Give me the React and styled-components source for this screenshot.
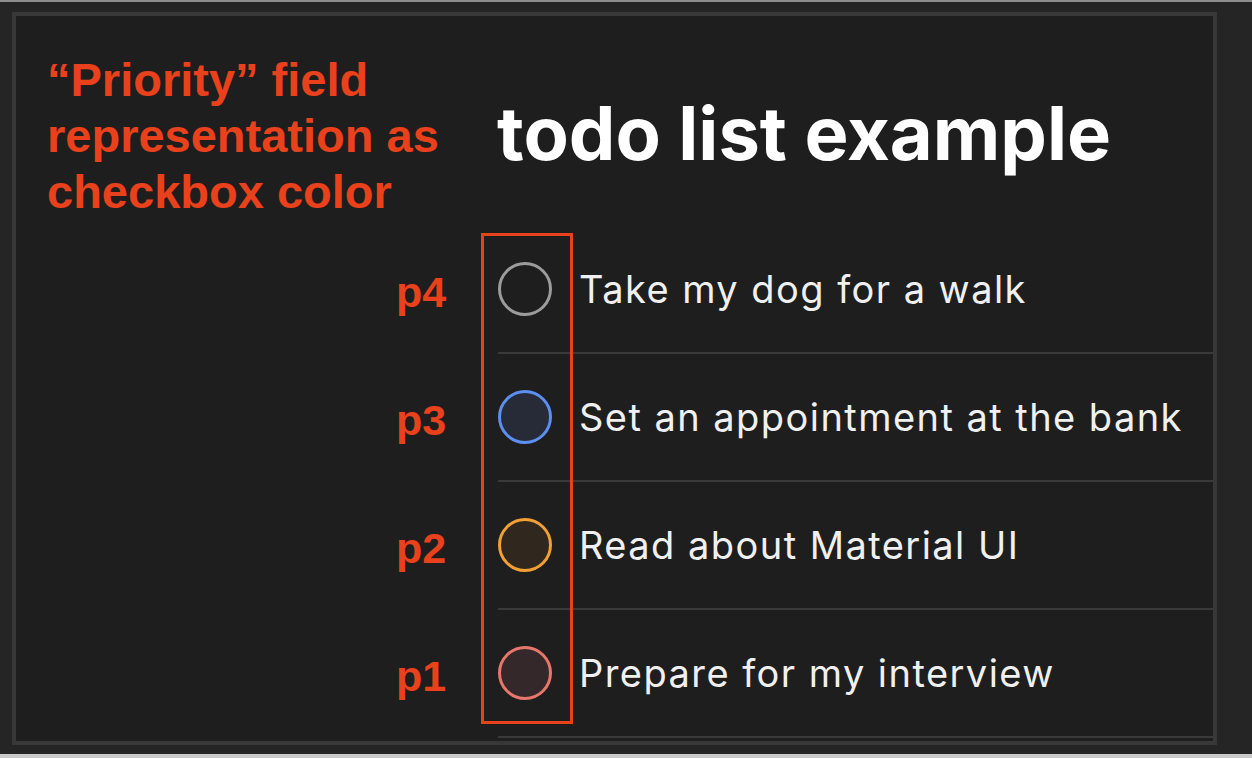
import React from "react";
import styled, { createGlobalStyle } from "styled-components";

const Global = createGlobalStyle`
  html, body { margin: 0; padding: 0; background: #252525; }
  * { box-sizing: border-box; }
`;

const Page = styled.div`
  width: 1252px;
  height: 758px;
  background: #252525;
  border-top: 2px solid #8e8e8e;
  border-bottom: 4px solid #c9c9c9;
  padding: 10px 35px 9px 12px;
  display: flex;
`;

const Frame = styled.div`
  position: relative;
  flex: 1;
  background: #1e1e1e;
  border: 4px solid #383838;
  display: flex;
  flex-direction: column;
  overflow: hidden;
`;

const Header = styled.div`
  height: 210px;
  display: flex;
  align-items: flex-start;
`;

const Annotation = styled.div`
  width: 481px;
  padding: 36px 0 0 31px;
  font-family: "Liberation Sans", Arial, sans-serif;
  font-weight: 700;
  font-size: 47px;
  line-height: 56px;
  color: #e8411c;
  white-space: nowrap;
`;

const Title = styled.h1`
  margin: 80px 0 0 0;
  font-family: Inter, "Noto Sans", sans-serif;
  font-weight: 700;
  font-size: 74px;
  line-height: 1;
  color: #ffffff;
`;

const List = styled.div`
  display: flex;
  flex-direction: column;
`;

const Row = styled.div`
  display: flex;
  height: 128px;
`;

const Label = styled.div`
  width: 482px;
  padding: 4px 26px 0 354px;
  display: flex;
  align-items: center;
  justify-content: center;
  font-family: "Liberation Sans", Arial, sans-serif;
  font-weight: 700;
  font-size: 43px;
  color: #e8411c;
`;

const Item = styled.div`
  flex: 1;
  display: flex;
  align-items: center;
  gap: 27px;
  border-bottom: 2px solid #3a3a3a;
`;

const Circle = styled.span`
  width: 54px;
  height: 54px;
  flex: none;
  border-radius: 50%;
  border: 3px solid ${(p) => p.$ring};
  background: ${(p) => p.$fill};
`;

const Text = styled.span`
  font-family: Inter, "Noto Sans", sans-serif;
  font-size: 38px;
  color: #f0f0f0;
  letter-spacing: 1.45px;
  white-space: nowrap;
`;

const Highlight = styled.div`
  position: absolute;
  left: 465px;
  top: 217px;
  width: 92px;
  height: 491px;
  border: 3px solid #e8411c;
  pointer-events: none;
`;

const todos = [
  { p: "p4", text: "Take my dog for a walk", ring: "#9c9c9c", fill: "#1e1e1e" },
  { p: "p3", text: "Set an appointment at the bank", ring: "#5b8ff0", fill: "#262b37" },
  { p: "p2", text: "Read about Material UI", ring: "#f2a033", fill: "#30281f" },
  { p: "p1", text: "Prepare for my interview", ring: "#e8776b", fill: "#35282a" },
];

export default function App() {
  return (
    <>
      <Global />
      <Page>
        <Frame>
          <Header>
            <Annotation>
              “Priority” field
              <br />
              representation as
              <br />
              checkbox color
            </Annotation>
            <Title>todo list example</Title>
          </Header>
          <List>
            {todos.map((t) => (
              <Row key={t.p}>
                <Label>{t.p}</Label>
                <Item>
                  <Circle $ring={t.ring} $fill={t.fill} />
                  <Text>{t.text}</Text>
                </Item>
              </Row>
            ))}
          </List>
          <Highlight />
        </Frame>
      </Page>
    </>
  );
}
